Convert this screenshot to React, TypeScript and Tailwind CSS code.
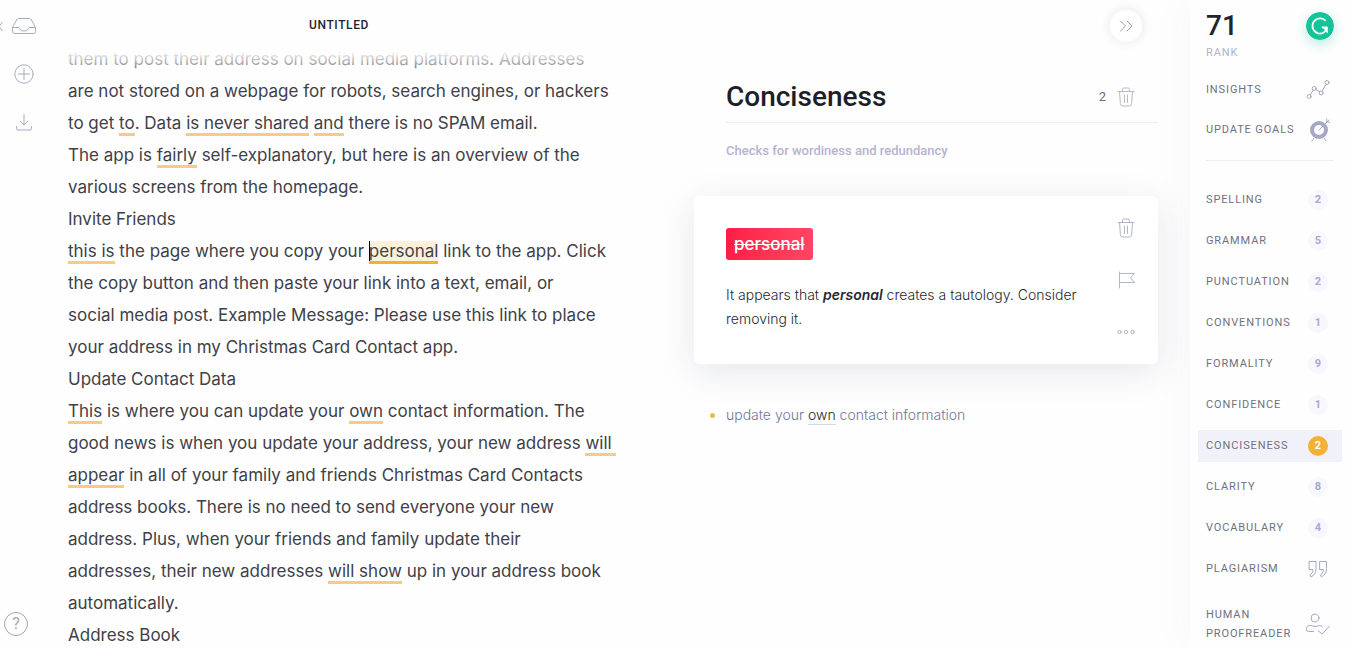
import type { ReactNode } from "react";

function Icon({ size = 24, children }: { size?: number; children: ReactNode }) {
  return (
    <svg width={size} height={size} viewBox={`0 0 ${size} ${size}`} fill="none" stroke="currentColor" strokeWidth="1" strokeLinecap="round" strokeLinejoin="round" aria-hidden="true">
      {children}
    </svg>
  );
}

function TrashIcon() {
  return (
    <Icon>
      <path d="M4 6.5h16M8.500 6V4.500a1.500 1.500 0 0 1 1.500-1.500h4a1.500 1.500 0 0 1 1.500 1.500V6M5.500 6.500l.9 12a2.500 2.500 0 0 0 2.500 2.500h6.200a2.500 2.500 0 0 0 2.500-2.500l.9-12M10.500 10v7.500M13.500 10v7.500" />
    </Icon>
  );
}

function Mark({ children }: { children: ReactNode }) {
  return <span className="border-b-[3px] border-[#f6cd7c]">{children}</span>;
}

function ActiveMark({ children }: { children: ReactNode }) {
  return (
    <span className="relative border-b-[3px] border-[#f0b03a] bg-[#fcf1d8]">
      <span className="absolute top-0 bottom-0 left-0 w-px bg-black" />
      {children}
    </span>
  );
}

const lines: ReactNode[] = [
  "them to post their address on social media platforms. Addresses",
  "are not stored on a webpage for robots, search engines, or hackers",
  <>to get <Mark>to</Mark>. Data <Mark>is never shared</Mark> <Mark>and</Mark> there is no SPAM email.</>,
  <>The app is <Mark>fairly</Mark> self-explanatory, but here is an overview of the</>,
  "various screens from the homepage.",
  "Invite Friends",
  <><Mark>this is</Mark> the page where you copy your <ActiveMark>personal</ActiveMark> link to the app. Click</>,
  "the copy button and then paste your link into a text, email, or",
  "social media post. Example Message: Please use this link to place",
  "your address in my Christmas Card Contact app.",
  "Update Contact Data",
  <><Mark>This</Mark> is where you can update your <Mark>own</Mark> contact information. The</>,
  <>good news is when you update your address, your new address <Mark>{"will "}</Mark></>,
  <><Mark>appear</Mark> in all of your family and friends Christmas Card Contacts</>,
  "address books. There is no need to send everyone your new",
  "address. Plus, when your friends and family update their",
  <>addresses, their new addresses <Mark>will show</Mark> up in your address book</>,
  "automatically.",
  "Address Book",
];

const checks = [
  { label: "Spelling", count: 2 },
  { label: "Grammar", count: 5 },
  { label: "Punctuation", count: 2 },
  { label: "Conventions", count: 1 },
  { label: "Formality", count: 9 },
  { label: "Confidence", count: 1 },
  { label: "Conciseness", count: 2, active: true },
  { label: "Clarity", count: 8 },
  { label: "Vocabulary", count: 4 },
];

function Toolbar() {
  return (
    <nav aria-label="Document tools" className="flex w-12 shrink-0 flex-col items-center gap-6 pt-[14px] pb-3 text-[#a9abc6]">
      <button aria-label="Documents" className="flex w-full items-center">
        <svg width="12" height="24" viewBox="0 0 12 24" fill="none" stroke="#a8aab4" aria-hidden="true">
          <path d="M2.5 8L-1 12.5l3.5 4.5" />
        </svg>
        <Icon>
          <path d="M.5 13.5L4.6 6a2.4 2.4 0 0 1 2.1-1.5h10.6A2.4 2.4 0 0 1 19.4 6l4.1 7.5v4a2 2 0 0 1-2 2h-19a2 2 0 0 1-2-2zM.5 13.5h6.2c1.2 0 1.3 3.3 3.3 3.3h4c2 0 2.1-3.3 3.3-3.3h6.2" />
        </Icon>
      </button>
      <button aria-label="New document">
        <Icon>
          <circle cx="12" cy="12" r="9.2" />
          <path d="M12 6.5v11M6.5 12h11" />
        </Icon>
      </button>
      <button aria-label="Download">
        <Icon>
          <path d="M12 4.5v10.5M8.5 11.5L12 15l3.5-3.5M4.5 16.5v2a1.5 1.5 0 0 0 1.5 1.5h12a1.5 1.5 0 0 0 1.5-1.5v-2" />
        </Icon>
      </button>
      <button aria-label="Help" className="mt-auto mr-auto ml-1 flex size-6 items-center justify-center rounded-full border border-[#a4a6b0] text-base text-[#a4a6b0]">
        ?
      </button>
    </nav>
  );
}

function Editor() {
  return (
    <main className="flex min-w-0 flex-1 flex-col overflow-hidden">
      <header className="flex h-[43px] shrink-0 items-center justify-center pt-[7px] pr-12">
        <h1 className="text-xs font-medium tracking-wider text-[#23252e]">UNTITLED</h1>
      </header>
      <div className="relative min-h-0 flex-1 overflow-hidden pl-5">
        {lines.map((line, i) => (
          <p key={i} className="font-[Inter,sans-serif] text-[17px] leading-8 whitespace-pre text-[#3f4148]">{line}</p>
        ))}
        <div className="pointer-events-none absolute inset-x-0 top-0 h-8 bg-linear-to-b from-[#fefefe] from-25% to-[#fefefe]/10" />
      </div>
    </main>
  );
}

function Assistant() {
  return (
    <section aria-label="Suggestions" className="flex w-lg shrink-0 flex-col pr-8 pl-4">
      <button aria-label="Hide assistant" className="mt-[10px] mr-4 flex size-8 items-center justify-center self-end rounded-full bg-white text-[#9a9cab] shadow-[0_0_10px_2px_rgba(30,35,60,0.07)]">
        <Icon size={16}>
          <path d="M2.5 3L7.5 8l-5 5M9 3l5 5-5 5" />
        </Icon>
      </button>
      <header className="mt-[30px] ml-8 flex h-[51px] items-center border-b border-[#efeff4]">
        <h2 className="flex-1 text-[28px] leading-9 font-medium text-[#1d1e27]">Conciseness</h2>
        <span className="mr-2 text-[13px] text-[#6d6f7b]">2</span>
        <button aria-label="Dismiss all" className="mr-5 text-[#b9bbc7]"><TrashIcon /></button>
      </header>
      <p className="mt-[18px] ml-8 text-[13px] leading-5 font-medium text-[#b5b3cf]">Checks for wordiness and redundancy</p>
      <article className="mt-[35px] flex min-h-42 rounded-md bg-white py-8 pr-5 pl-8 shadow-[0_8px_36px_rgba(40,50,90,0.11)]">
        <div className="min-w-0 flex-1">
          <button className="h-8 rounded-[3px] bg-linear-to-r from-[#fd1c45] to-[#ff4563] px-2 font-[Inter,sans-serif] text-[17px] leading-8 font-medium text-white line-through">personal</button>
          <p className="mt-[23px] font-[Inter,sans-serif] text-sm leading-6 font-light text-[#26282f]">
            It appears that <em className="font-semibold">personal</em> creates a tautology. Consider
            <br />
            removing it.
          </p>
        </div>
        <div className="-my-3 flex flex-col justify-between text-[#b2b5cb]">
          <button aria-label="Dismiss"><TrashIcon /></button>
          <button aria-label="Flag">
            <Icon><path d="M5.5 4v16M5.5 5.5h15l-4 4.5 4 4.5h-15" /></Icon>
          </button>
          <button aria-label="More">
            <Icon>
              <circle cx="5.5" cy="12" r="1.7" />
              <circle cx="12" cy="12" r="1.7" />
              <circle cx="18.5" cy="12" r="1.7" />
            </Icon>
          </button>
        </div>
      </article>
      <button className="mt-[39px] ml-4 flex items-center text-left font-[Inter,sans-serif] text-sm leading-6 font-light text-[#74759c]">
        <span className="mr-[11px] size-[5px] rounded-full bg-[#eebb4b]" />
        <span>update your <span className="border-b border-[#d5d6e0] pb-px text-[#26282f]">own</span> contact information</span>
      </button>
    </section>
  );
}

const rowClass = "flex w-full items-center pr-2 pl-2 text-left text-[11px] tracking-[0.08em] uppercase text-[#6f717e]";

function Row({ label, children, className }: { label: ReactNode; children: ReactNode; className: string }) {
  return (
    <button className={`${rowClass} ${className}`}>
      <span className="flex-1">{label}</span>
      <span className="flex w-8 shrink-0 justify-center text-[#a6a8c6]">{children}</span>
    </button>
  );
}

function Sidebar() {
  return (
    <aside className="flex w-40 shrink-0 flex-col px-2 shadow-[0_0_36px_rgba(70,80,140,0.05)]">
      <div className="flex items-start justify-between pt-3 pr-2 pl-2">
        <div>
          <div className="text-[28px] leading-7 font-medium text-[#23252e]">71</div>
          <div className="mt-1 text-[11px] leading-[18px] tracking-[0.08em] text-[#b1b2cc]">RANK</div>
        </div>
        <svg className="rounded-full shadow-[0_4px_12px_rgba(21,195,154,0.3)]" width="28" height="28" viewBox="0 0 28 28" fill="none" aria-hidden="true">
          <circle cx="14" cy="14" r="14" fill="#15c39a" />
          <path d="M19.6 8.800A7.600 7.600 0 1 0 17.500 20.800M21.300 15.300h-5.500" stroke="white" strokeWidth="1.800" />
          <path d="M16 15h5.800v6.500l-1.900-1.800-1.900 1.500-1-1.300 2-1.800z" fill="white" />
        </svg>
      </div>
      <Row label="Insights" className="mt-2 h-10">
        <Icon>
          <circle cx="3.2" cy="18.5" r="2" />
          <circle cx="8.2" cy="10.5" r="2" />
          <circle cx="15.2" cy="15" r="2" />
          <circle cx="21" cy="4.5" r="2" />
          <path d="M4.3 16.8l2.8-4.6M9.9 11.6l3.6 2.3M16.2 13.2l3.9-7" />
        </Icon>
      </Row>
      <Row label="Update goals" className="h-10">
        <Icon>
          <circle cx="13" cy="12" r="7" strokeWidth="4" />
          <path d="M13 12L23 2M20.8 1v3.2H24M8 20l-2 3M18 20l2 3" />
        </Icon>
      </Row>
      <hr className="mx-2 mt-[10px] border-[#eeeef5]" />
      <div className="mt-[23px] flex flex-col gap-[9px]">
        {checks.map((c) => (
          <Row key={c.label} label={c.label} className={c.active ? "h-8 bg-[#f1f1fa]" : "h-8"}>
            <span className={c.active ? "flex size-5 items-center justify-center rounded-full bg-[#f2b137] text-[11px] font-bold tracking-normal text-white" : "flex size-5 items-center justify-center rounded-full bg-[#f7f7fd] text-[11px] font-bold tracking-normal text-[#a9a7d8]"}>
              {c.count}
            </span>
          </Row>
        ))}
        <Row label="Plagiarism" className="h-8">
          <Icon>
            <path d="M3.5 4.5h6.5v7c0 4-1.6 7-5.2 8.3l-.9-1.9c2-.9 3-2.8 3-5.4H3.5zM14 4.5h6.5v7c0 4-1.6 7-5.2 8.3l-.9-1.9c2-.9 3-2.8 3-5.4H14z" />
          </Icon>
        </Row>
      </div>
      <Row label={<>Human<br />Proofreader</>} className="mt-5 leading-[19px]">
        <Icon>
          <circle cx="9" cy="6" r="4" />
          <path d="M7.500 19.500H2.500a2 2 0 0 1-2-2v-.5c0-2.600 1.700-3.500 4.200-3.500 1.400 0 2.600 1 4.300 1s2.900-1 4.300-1c1.300 0 2.400.4 3.100 1.200M12 18.500l4 3.500 7.500-8" />
        </Icon>
      </Row>
    </aside>
  );
}

export default function App() {
  return (
    <div className="flex h-screen overflow-hidden bg-[#fefefe] font-[Roboto,'Liberation_Sans',sans-serif]">
      <Toolbar />
      <Editor />
      <Assistant />
      <Sidebar />
    </div>
  );
}
